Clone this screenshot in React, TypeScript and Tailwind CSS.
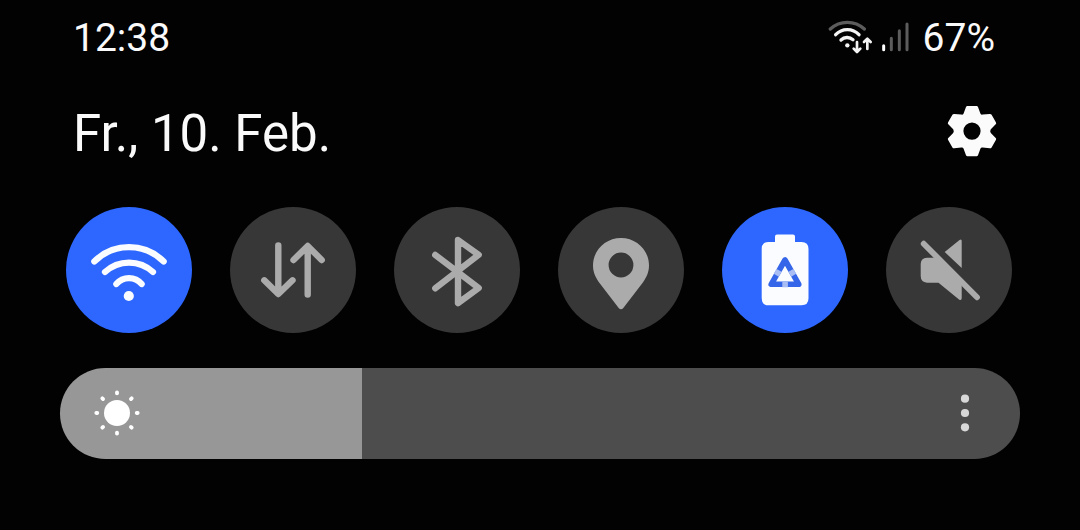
import { useState, type ReactNode } from "react";

function WifiStatusIcon() {
  return (
    <svg viewBox="24 24 135 108" className="h-9 w-[45px]" fill="none" strokeLinecap="round" strokeLinejoin="round" role="img" aria-label="WLAN">
      <path d="M31 57A75 75 0 0 1 133 57" stroke="#5c5c5c" strokeWidth="10" />
      <g stroke="#f4f4f4">
        <path d="M47 74A48 48 0 0 1 117 74" strokeWidth="10" />
        <path d="M63 90A27 27 0 0 1 99 89" strokeWidth="10" />
        <path d="M111 96V125M101 116L111 126L121 116M142 117V88M132 96L142 86L152 96" strokeWidth="8" />
      </g>
      <circle cx="82" cy="106" r="6.5" fill="#f4f4f4" />
    </svg>
  );
}

function SignalIcon() {
  return (
    <svg viewBox="183 36 84 90" className="h-[30px] w-7" strokeLinecap="round" strokeWidth="9" role="img" aria-label="Mobilfunksignal">
      <path d="M191 107V119" stroke="#ffffff" />
      <path d="M214 85V119M238 62V119M261 42V119" stroke="#5c5c5c" />
    </svg>
  );
}

function GearIcon() {
  return (
    <svg viewBox="0 -1 52 54" className="h-[54px] w-[52px]" fill="#fbfbfb" aria-hidden="true">
      <path
        fillRule="evenodd"
        d="M21.4 1H30.6Q31.6 1 32 2L34.4 8.4Q35 9.9 36.6 9.6L43.8 8.9Q45 8.8 45.6 9.8L50 17.4Q50.5 18.4 49.7 19.2L44.8 24.2Q43.6 26.1 44.8 28L49.7 33Q50.5 33.8 50 34.8L45.6 42.4Q45 43.4 43.8 43.3L36.6 42.6Q35 42.3 34.4 43.8L32 50.2Q31.6 51.2 30.6 51.2H21.4Q20.4 51.2 20 50.2L17.6 43.8Q17 42.3 15.4 42.6L8.2 43.3Q7 43.4 6.4 42.4L2 34.8Q1.5 33.8 2.3 33L7.2 28Q8.4 26.1 7.2 24.2L2.3 19.2Q1.5 18.4 2 17.4L6.4 9.8Q7 8.8 8.2 8.9L15.4 9.6Q17 9.9 17.6 8.4L20 2Q20.4 1 21.4 1ZM26 17.5A8.6 8.6 0 1 0 26 34.7A8.6 8.6 0 1 0 26 17.5Z"
      />
    </svg>
  );
}

const tiles: { label: string; on: boolean; icon: ReactNode }[] = [
  {
    label: "WLAN",
    on: true,
    icon: (
      <>
        <g fill="none" stroke="currentColor" strokeWidth="6.2" strokeLinecap="round">
          <path d="M28.3 54.5A49.2 49.2 0 0 1 97.7 54.5" />
          <path d="M39 65A35.3 35.3 0 0 1 87 65" />
          <path d="M50.3 77A16.5 16.5 0 0 1 75.7 77" />
        </g>
        <circle cx="62.8" cy="89" r="5.1" fill="currentColor" />
      </>
    ),
  },
  {
    label: "Mobile Daten",
    on: false,
    icon: (
      <path
        d="M48.3 38.5V86.5M34.3 73.3L48.3 87L62.5 73.3M77.7 87.5V39.5M63.5 53L77.7 39L91.7 53"
        fill="none"
        stroke="currentColor"
        strokeWidth="6.4"
        strokeLinecap="round"
        strokeLinejoin="round"
      />
    ),
  },
  {
    label: "Bluetooth",
    on: false,
    icon: (
      <path
        d="M41.3 48L84.7 81L64 96.2V33L84.7 47.8L41.3 81.3"
        fill="none"
        stroke="currentColor"
        strokeWidth="6.4"
        strokeLinecap="round"
        strokeLinejoin="round"
      />
    ),
  },
  {
    label: "Standort",
    on: false,
    icon: (
      <path
        fillRule="evenodd"
        fill="currentColor"
        d="M63 31C47.5 31 35 43 35 58.5C35 65 37.5 70.5 41.5 76L60.7 101Q63 103.6 65.3 101L84.5 76C88.5 70.5 91 65 91 58.5C91 43 78.5 31 63 31ZM63 45.6A12.4 12.4 0 1 1 63 70.4A12.4 12.4 0 1 1 63 45.6Z"
      />
    ),
  },
  {
    label: "Energiesparen",
    on: true,
    icon: (
      <>
        <path d="M55 27.5H71Q73 27.5 73 29.5V35H79.5Q86.5 35 86.5 42V91.3Q86.5 98.3 79.5 98.3H46.7Q39.7 98.3 39.7 91.3V42Q39.7 35 46.7 35H53V29.5Q53 27.5 55 27.5Z" fill="currentColor" />
        <path d="M63 53L49.2 77.3H76.8Z" fill="none" stroke="#3565e8" strokeWidth="5.6" strokeLinejoin="round" />
        <path d="M57.1 63.4L54.3 68.3M68.9 63.4L71.7 68.3M60.3 77.3H65.9" stroke="#a9bdf5" strokeWidth="5.8" />
      </>
    ),
  },
  {
    label: "Stumm",
    on: false,
    icon: (
      <>
        <path d="M58.7 45L73.5 33Q75.7 31.5 75.7 34V61ZM41 50.7H50L75.7 76V91Q75.7 94 73 92.5L52.5 75.7H41Q34.7 75 34.7 69V57Q34.7 51.2 41 50.7Z" fill="currentColor" />
        <path d="M37.7 36.7L91 90.3" stroke="currentColor" strokeWidth="5.8" strokeLinecap="round" />
      </>
    ),
  },
];

function Tile({ label, on, icon }: { label: string; on: boolean; icon: ReactNode }) {
  const [active, setActive] = useState(on);
  return (
    <button
      type="button"
      aria-label={label}
      aria-pressed={active}
      onClick={() => setActive(!active)}
      className={`size-[126px] shrink-0 rounded-full ${active ? "bg-[#2d67ff] text-[#fafcff]" : "bg-[#373737] text-[#ababab]"}`}
    >
      <svg viewBox="0 0 126 126" className="size-full" aria-hidden="true">
        {icon}
      </svg>
    </button>
  );
}

function BrightnessSlider() {
  const [value, setValue] = useState(31.5);
  return (
    <div className="relative mt-[35px]">
      <input
        type="range"
        aria-label="Helligkeit"
        min="0"
        max="100"
        step="0.5"
        value={value}
        onChange={(e) => setValue(Number(e.target.value))}
        className="block h-[91px] w-full cursor-pointer appearance-none rounded-full [&::-moz-range-thumb]:opacity-0 [&::-webkit-slider-thumb]:opacity-0"
        style={{ background: `linear-gradient(to right, #979797 ${value}%, #4d4d4d ${value}%)` }}
      />
      <svg viewBox="-24 -24 48 48" className="pointer-events-none absolute top-[21px] left-[33px] size-12" fill="#ffffff" aria-hidden="true">
        <circle r="13" />
        {[0, 45, 90, 135, 180, 225, 270, 315].map((angle) => (
          <rect key={angle} x="-1.9" y="-22.6" width="3.8" height="4.8" rx="1.8" transform={`rotate(${angle})`} />
        ))}
      </svg>
      <button type="button" aria-label="Weitere Optionen" className="absolute top-[21px] right-8 h-12 w-[46px]">
        <svg viewBox="-23 -24 46 48" className="size-full" fill="#d8d8d8" aria-hidden="true">
          <circle cy="-14.3" r="4.1" />
          <circle r="4.1" />
          <circle cy="14.3" r="4.1" />
        </svg>
      </button>
    </div>
  );
}

export default function App() {
  return (
    <main className="min-h-screen bg-[#020202] px-15 pt-[18px] pb-10 font-['Roboto',sans-serif] text-[#fafafa]">
      <header className="pr-[22px] pl-[13px]">
        <div className="flex h-10 items-start justify-between pr-[3px] text-[39px] leading-10">
          <time>12:38</time>
          <div className="flex items-start">
            <WifiStatusIcon />
            <div className="mt-1 mr-3.5 ml-2">
              <SignalIcon />
            </div>
            <span>67%</span>
          </div>
        </div>
        <div className="mt-[46px] flex items-start justify-between">
          <h1 className="text-[51px] leading-[60px]">Fr., 10. Feb.</h1>
          <button type="button" aria-label="Einstellungen">
            <GearIcon />
          </button>
        </div>
      </header>
      <section aria-label="Schnelleinstellungen" className="mt-[43px] flex justify-between pr-2 pl-1.5">
        {tiles.map((tile) => (
          <Tile key={tile.label} {...tile} />
        ))}
      </section>
      <BrightnessSlider />
    </main>
  );
}
